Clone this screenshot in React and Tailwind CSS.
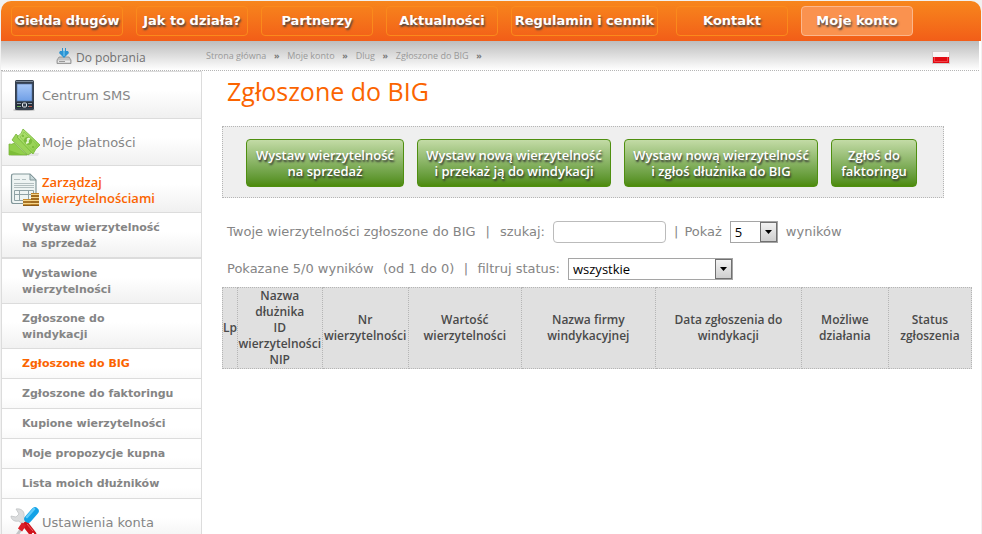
const navItems = [
  { label: "Giełda długów" },
  { label: "Jak to działa?" },
  { label: "Partnerzy" },
  { label: "Aktualności" },
  { label: "Regulamin i cennik", wide: true },
  { label: "Kontakt" },
  { label: "Moje konto", active: true },
];

const crumbs = ["Strona główna", "Moje konto", "Dlug", "Zgłoszone do BIG"];

const subItems = [
  { lines: ["Wystaw wierzytelność", "na sprzedaż"], thick: true },
  { lines: ["Wystawione", "wierzytelności"] },
  { lines: ["Zgłoszone do", "windykacji"] },
  { lines: ["Zgłoszone do BIG"], active: true },
  { lines: ["Zgłoszone do faktoringu"] },
  { lines: ["Kupione wierzytelności"] },
  { lines: ["Moje propozycje kupna"] },
  { lines: ["Lista moich dłużników"] },
];

const actions = [
  { lines: ["Wystaw wierzytelność", "na sprzedaż"], width: "w-[158px]" },
  { lines: ["Wystaw nową wierzytelność", "i przekaż ją do windykacji"], width: "w-[194px]" },
  { lines: ["Wystaw nową wierzytelność", "i zgłoś dłużnika do BIG"], width: "w-[194px]" },
  { lines: ["Zgłoś do", "faktoringu"], width: "w-[86px]" },
];

const columns = [
  { lines: ["Lp"], width: "w-[2%]" },
  { lines: ["Nazwa", "dłużnika", "ID", "wierzytelności", "NIP"], width: "w-[11.3%]" },
  { lines: ["Nr", "wierzytelności"], width: "w-[11.5%]" },
  { lines: ["Wartość", "wierzytelności"], width: "w-[15.1%]" },
  { lines: ["Nazwa firmy", "windykacyjnej"], width: "w-[17.9%]" },
  { lines: ["Data zgłoszenia do", "windykacji"], width: "w-[19.5%]" },
  { lines: ["Możliwe", "działania"], width: "w-[11.6%]" },
  { lines: ["Status", "zgłoszenia"], width: "w-[11.1%]" },
];

function Lines({ lines }) {
  return lines.map((line) => (
    <span key={line} className="block whitespace-nowrap">{line}</span>
  ));
}

function PhoneIcon() {
  return (
    <svg width="32" height="32" viewBox="0 0 32 32" className="shrink-0">
      <defs>
        <linearGradient id="screen" x1="0" y1="0" x2="0" y2="1">
          <stop offset="0" stopColor="#a9c8f7" />
          <stop offset="1" stopColor="#6f9fe6" />
        </linearGradient>
      </defs>
      <ellipse cx="16" cy="31" rx="11" ry="1" fill="#bbb" />
      <rect x="7" y="1" width="19" height="30" rx="1.5" fill="#36404e" />
      <rect x="8" y="2" width="17" height="1" fill="#7b8898" />
      <rect x="9" y="5" width="15" height="17" fill="url(#screen)" stroke="#4d6c9c" strokeWidth="0.6" />
      <rect x="8" y="23" width="17" height="6" fill="#27303c" />
      <path d="M9 24.500h4M20 24.500h4M9 27.500h4M20 27.500h4" stroke="#8e9cab" />
      <path d="M9 27.500h3" stroke="#6fb35e" />
      <path d="M21 27.500h3" stroke="#c25a4c" />
      <rect x="14.500" y="24" width="4" height="4" rx="1" fill="#36404e" stroke="#e3e9ef" />
    </svg>
  );
}

function MoneyIcon() {
  return (
    <svg width="32" height="32" viewBox="0 0 32 32" className="shrink-0">
      <defs>
        <linearGradient id="bill" x1="0" y1="0" x2="1" y2="1">
          <stop offset="0" stopColor="#b4e37a" />
          <stop offset="1" stopColor="#8ccb45" />
        </linearGradient>
      </defs>
      <path d="M3 30h27l1-3H4z" fill="#e4e4e4" />
      <path d="M1 18q3 1 5-1l13 12H1z" fill="#92cf4c" stroke="#6eae2c" strokeWidth="0.7" />
      <path d="M1 24l14 5H1z" fill="#7dbd38" />
      <path d="M4 14 8 8l18 17-6 4z" fill="#9bd458" stroke="#6eae2c" strokeWidth="0.7" />
      <path d="M9 11q5-3 6-8 9 8 17 16-5 4-7 9z" fill="url(#bill)" stroke="#74b636" strokeWidth="0.8" />
      <path d="M12 11q3-2 4-5l13 13q-3 3-4 6z" fill="none" stroke="#86c648" strokeWidth="0.7" />
      <ellipse cx="20" cy="15" rx="4.200" ry="3.600" fill="#7dbd3c" transform="rotate(40 20 15)" />
      <path d="M22 13c-2-1.500-3.500 0-2.300 1.500s1 3-1.700 1.500M21.500 12l-3 6" fill="none" stroke="#effbe0" strokeWidth="1.100" />
      <circle cx="15" cy="10" r="1" fill="#74b636" />
      <circle cx="25" cy="21" r="1" fill="#74b636" />
    </svg>
  );
}

function LedgerIcon() {
  return (
    <svg width="32" height="34" viewBox="0 0 32 34" className="shrink-0">
      <path d="M5.500 2H22l6 6v23.500H5.500q-2 0-2-2V4q0-2 2-2z" fill="#eef4f3" stroke="#82979a" strokeWidth="1.200" />
      <path d="M22 2v6h6z" fill="#c8d8da" stroke="#82979a" />
      <path d="M6 7.500h6M14 7.500h4M6 11.500h20M6 13.500h20M6 15.500h20" stroke="#a3b1b3" strokeWidth="0.800" />
      <path d="M6.500 18.500h19v10h-19zM6.500 22.500h19M11.500 18.500v10M20.500 18.500v10" fill="none" stroke="#8fa2a5" />
      <rect x="15" y="27" width="8" height="7" fill="#c58e32" />
      <rect x="23" y="21" width="8" height="13" fill="#bb8129" />
      <path d="M15 28.500h8M15 31.500h8M23 22.500h8M23 25.500h8M23 28.500h8M23 31.500h8" stroke="#f5d58c" />
      <path d="M15 30h8M15 33.500h8M23 24h8M23 27h8M23 30h8M23 33.500h8" stroke="#7b4e16" strokeWidth="0.800" />
    </svg>
  );
}

function ToolsIcon() {
  return (
    <svg width="32" height="32" viewBox="0 0 32 32" className="shrink-0">
      <path d="M8 3c6-1 9 3 8 8l4 6-4 4-5-6c-4 1-8-1-8-5l5 1 3-3z" fill="#dcddde" stroke="#bcbec0" strokeWidth="0.700" />
      <path d="M19 15 9 29" stroke="#c4c6c8" strokeWidth="3" />
      <path d="m18 19 7 9" stroke="#cf121a" strokeWidth="6.500" strokeLinecap="round" />
      <path d="m19 18 6 7" stroke="#ef5a5e" />
      <path d="m16 18-4 6" stroke="#dc1f28" strokeWidth="5" />
      <path d="m20 13 7-8" stroke="#12a2e6" strokeWidth="7.500" strokeLinecap="round" />
      <path d="m19 11 7-8" stroke="#5dcbfa" strokeWidth="2.500" strokeLinecap="round" />
      <circle cx="25" cy="28" r="1.200" fill="#fff" />
    </svg>
  );
}

function DownloadIcon() {
  return (
    <svg width="16" height="16" viewBox="0 0 16 16" className="shrink-0">
      <path d="M3 9h10l2 3v3.500H1V12z" fill="#c3c3c3" stroke="#8b8b8b" strokeWidth="0.800" />
      <path d="M2 12.500h12v2H2z" fill="#ededed" />
      <path d="M3 13.500h6" stroke="#9a9a9a" />
      <path d="M4 3h8l1 2-5 5-5-5z" fill="#2b93d2" />
      <path d="M6 0h1v3H6zM9 0h1v3H9z" fill="#2b93d2" />
      <path d="M8 2v6" stroke="#7ed0f7" />
    </svg>
  );
}

function FlagIcon() {
  return (
    <svg width="18" height="13" viewBox="0 0 18 13">
      <rect x="0.500" y="0.500" width="17" height="12" fill="#fbf5f5" stroke="#d2cccc" />
      <path d="M1 6h16v6H1z" fill="#e20a12" />
      <path d="M2.500 6v4.500h13V6" fill="none" stroke="#f0444a" />
    </svg>
  );
}

function MenuItem({ icon, children, active }) {
  return (
    <li className="border-b border-[#dcdcdc] bg-linear-to-b from-white from-40% to-[#f0f0f0]">
      <a
        href="#"
        className={`flex h-[46px] items-center gap-0.5 pl-1.5 ${
          active
            ? "font-['Open_Sans',sans-serif] text-[13px] leading-4 font-semibold text-[#fb6400]"
            : "text-[13px] text-[#858585]"
        }`}
      >
        {icon}
        <span className="pt-0.5">{children}</span>
      </a>
    </li>
  );
}

function Select({ id, options, width }) {
  return (
    <span className={`relative inline-flex h-[22px] ${width}`}>
      <select
        id={id}
        className="h-full w-full appearance-none rounded-none border border-[#a5a5a5] bg-white pl-1 font-['Open_Sans',sans-serif] text-[13px] leading-5 text-black"
      >
        {options.map((o) => (
          <option key={o}>{o}</option>
        ))}
      </select>
      <span className="pointer-events-none absolute inset-y-px right-px flex w-[17px] items-center justify-center border border-[#707070] bg-linear-to-b from-[#f2f2f2] to-[#cfcfcf]">
        <svg width="7" height="4" viewBox="0 0 7 4">
          <path d="M0 0h7L3.500 4z" fill="#000" />
        </svg>
      </span>
    </span>
  );
}

export default function App() {
  return (
    <div className="min-h-screen overflow-hidden bg-[#f1f1f1] px-px pt-px font-['DejaVu_Sans',sans-serif]">
      <div className="min-h-screen rounded-t-[10px] bg-white">
        <nav className="flex h-10 items-center gap-[13px] rounded-t-[10px] bg-linear-to-b from-[#f7861d] to-[#f25d18] pl-2.5">
          {navItems.map((item) => (
            <a
              key={item.label}
              href="#"
              className={`flex h-[30px] shrink-0 items-center justify-center rounded-[4px] border text-[13px] font-bold whitespace-nowrap text-white [text-shadow:1px_2px_2px_#444] ${
                item.wide ? "mr-[5px] w-[147px]" : "w-[112px]"
              } ${item.active ? "border-[#fbb78c] bg-[#fa924f]" : "border-[#fa8a1c]"}`}
            >
              {item.label}
            </a>
          ))}
        </nav>

        <div className="mr-0.5 flex h-[30px] items-center border-b border-dotted border-[#b5b5b5] bg-linear-to-b from-[#bdbdbd] to-white bg-clip-padding">
          <a
            href="#"
            className="flex w-[205px] items-center gap-1 pl-[55px] font-['Open_Sans',sans-serif] text-[12px] font-medium text-[#707070]"
          >
            <DownloadIcon />
            <span className="pt-1">Do pobrania</span>
          </a>
          <ol className="flex grow font-['Open_Sans',sans-serif] text-[9px] text-[#999]">
            {crumbs.map((c) => (
              <li key={c} className="flex">
                <a href="#">{c}</a>
                <span className="w-[21px] text-center font-bold text-[#777]">»</span>
              </li>
            ))}
          </ol>
          <a href="#" aria-label="Polski" className="mr-[29px] pt-1">
            <FlagIcon />
          </a>
        </div>

        <div className="flex items-start">
          <aside className="w-[201px] shrink-0 border border-b-0 border-[#dcdcdc]">
            <ul>
              <MenuItem icon={<PhoneIcon />}>Centrum SMS</MenuItem>
              <MenuItem icon={<MoneyIcon />}>Moje płatności</MenuItem>
              <MenuItem icon={<LedgerIcon />} active>
                <Lines lines={["Zarządzaj", "wierzytelnościami"]} />
              </MenuItem>
              {subItems.map((item) => (
                <li
                  key={item.lines[0]}
                  className={`border-[#dcdcdc] bg-linear-to-b from-white from-40% to-[#f0f0f0] bg-[length:100%_46px] bg-no-repeat ${
                    item.thick ? "border-b-2" : "border-b"
                  }`}
                >
                  <a
                    href="#"
                    className={`block pt-[7px] pl-5 text-[11px] leading-4 font-bold ${
                      item.lines.length > 1 ? "pb-[5px]" : "pb-1.5"
                    } ${item.active ? "text-[#fb6400]" : "text-[#858585]"}`}
                  >
                    <Lines lines={item.lines} />
                  </a>
                </li>
              ))}
              <MenuItem icon={<ToolsIcon />}>Ustawienia konta</MenuItem>
            </ul>
          </aside>

          <main className="min-w-0 grow pr-[9px] pl-5 text-[13px] text-[#858585]">
            <h1 className="pt-1 pl-[5px] font-['Open_Sans',sans-serif] text-[25px] leading-8 text-[#fb6400]">
              Zgłoszone do BIG
            </h1>

            <div className="mt-[19px] mr-7 flex gap-[13px] border border-dotted border-[#b5b5b5] bg-[#efefef] py-3 pb-2.5 pl-[23px]">
              {actions.map((a) => (
                <button
                  key={a.lines.join(" ")}
                  type="button"
                  className={`h-12 shrink-0 rounded-[4px] border border-[#4f8f10] bg-linear-to-b from-[#c3dba6] to-[#4d8b08] font-['Open_Sans',sans-serif] text-[13px] leading-4 font-semibold text-white [text-shadow:1px_2px_2px_#333] ${a.width}`}
                >
                  <Lines lines={a.lines} />
                </button>
              ))}
            </div>

            <div className="mt-[23px] flex h-[22px] items-center pl-[5px] whitespace-nowrap">
              <label htmlFor="search" className="flex w-[318px] justify-between">
                <span>Twoje wierzytelności zgłoszone do BIG</span>
                <span>|</span>
                <span>szukaj:</span>
              </label>
              <input
                id="search"
                type="text"
                className="ml-2 h-[22px] w-[113px] rounded-[4px] border border-[#bbb] bg-white px-1"
              />
              <label htmlFor="limit" className="mx-2 flex gap-1.5">
                <span>|</span>
                <span>Pokaż</span>
              </label>
              <Select id="limit" options={["5", "10", "20"]} width="w-12" />
              <span className="ml-2">wyników</span>
            </div>

            <div className="mt-[15px] flex h-[22px] items-center pl-[5px] whitespace-nowrap">
              <label htmlFor="status" className="mr-2 flex w-[333px] justify-between">
                <span>Pokazane 5/0 wyników</span>
                <span>(od 1 do 0)</span>
                <span>|</span>
                <span>filtruj status:</span>
              </label>
              <Select id="status" options={["wszystkie"]} width="w-[165px]" />
            </div>

            <table className="mt-[7px] w-full table-fixed border-collapse bg-[#e0e0e0] font-['Open_Sans',sans-serif] text-[12px] leading-4 text-[#4a4a4a]">
              <thead>
                <tr>
                  {columns.map((c) => (
                    <th
                      key={c.lines.join(" ")}
                      className={`border border-dotted border-[#b5b5b5] p-0 text-center font-semibold ${c.width}`}
                    >
                      <Lines lines={c.lines} />
                    </th>
                  ))}
                </tr>
              </thead>
            </table>
          </main>
        </div>
      </div>
    </div>
  );
}
